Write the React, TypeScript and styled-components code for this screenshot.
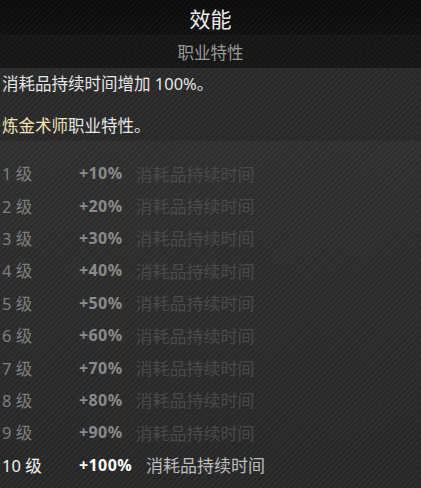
import React from "react";
import styled, { createGlobalStyle } from "styled-components";

const levels = [10, 20, 30, 40, 50, 60, 70, 80, 90, 100];

const App = () => {
  return (
    <>
      <GlobalStyle />
      <Panel>
        <TitleBar>效能</TitleBar>
        <SubTitleBar>职业特性</SubTitleBar>
        <Description>
          <Line>消耗品持续时间增加 100%。</Line>
          <Line>
            <Highlight>炼金术师</Highlight>职业特性。
          </Line>
        </Description>
        <LevelList>
          {levels.map((value, i) => {
            const active = i === levels.length - 1;
            return (
              <LevelRow key={value}>
                <LevelLabel $active={active}>{i + 1} 级</LevelLabel>
                <Bonus $active={active}>+{value}%</Bonus>
                <Effect $active={active}>消耗品持续时间</Effect>
              </LevelRow>
            );
          })}
        </LevelList>
      </Panel>
    </>
  );
};

export default App;

const GlobalStyle = createGlobalStyle`
  html, body {
    margin: 0;
    padding: 0;
    background: #282828;
  }
  body {
    font-family: "Noto Sans", "Noto Sans CJK SC", sans-serif;
  }
`;

const stripes = `repeating-linear-gradient(
  135deg,
  rgba(255, 255, 255, 0.025) 0px,
  rgba(255, 255, 255, 0.025) 2px,
  rgba(0, 0, 0, 0.04) 2px,
  rgba(0, 0, 0, 0.04) 4px
)`;

const Panel = styled.div`
  width: 421px;
  height: 488px;
  display: flex;
  flex-direction: column;
  overflow: hidden;
`;

const TitleBar = styled.div`
  height: 36px;
  display: flex;
  align-items: center;
  justify-content: center;
  background: ${stripes}, linear-gradient(#0a0a0a, #101010);
  color: #ececec;
  font-size: 21px;
  border-bottom: 1px solid #1c1c1c;
  box-sizing: border-box;
`;

const SubTitleBar = styled.div`
  height: 32px;
  display: flex;
  align-items: center;
  justify-content: center;
  background: ${stripes}, #161616;
  color: #9a9a9a;
  font-size: 16.5px;
`;

const Description = styled.div`
  height: 73px;
  box-sizing: border-box;
  padding: 5px 2px;
  display: flex;
  flex-direction: column;
  gap: 21px;
  background: ${stripes}, #2a2a2a;
  color: #e6e6e6;
  font-size: 16.5px;
  line-height: 21px;
`;

const Line = styled.div`
  white-space: nowrap;
`;

const Highlight = styled.span`
  color: #f2e2b4;
`;

const LevelList = styled.div`
  flex: 1;
  padding: 16px 2px 0;
  background: ${stripes}, linear-gradient(#303030, #282828);
`;

const LevelRow = styled.div`
  height: 32.4px;
  display: flex;
  align-items: center;
  font-size: 16px;
  white-space: nowrap;
`;

const LevelLabel = styled.span<{ $active: boolean }>`
  width: 77px;
  font-size: 16.5px;
  color: ${(p) => (p.$active ? "#f0f0f0" : "#7d7d7d")};
`;

const Bonus = styled.span<{ $active: boolean }>`
  font-weight: 700;
  letter-spacing: 0.4px;
  margin-right: ${(p) => (p.$active ? "14px" : "13px")};
  color: ${(p) => (p.$active ? "#ffffff" : "#8a8a8a")};
`;

const Effect = styled.span<{ $active: boolean }>`
  font-size: 17px;
  color: ${(p) => (p.$active ? "#bdbdbd" : "#4a4a4a")};
`;
